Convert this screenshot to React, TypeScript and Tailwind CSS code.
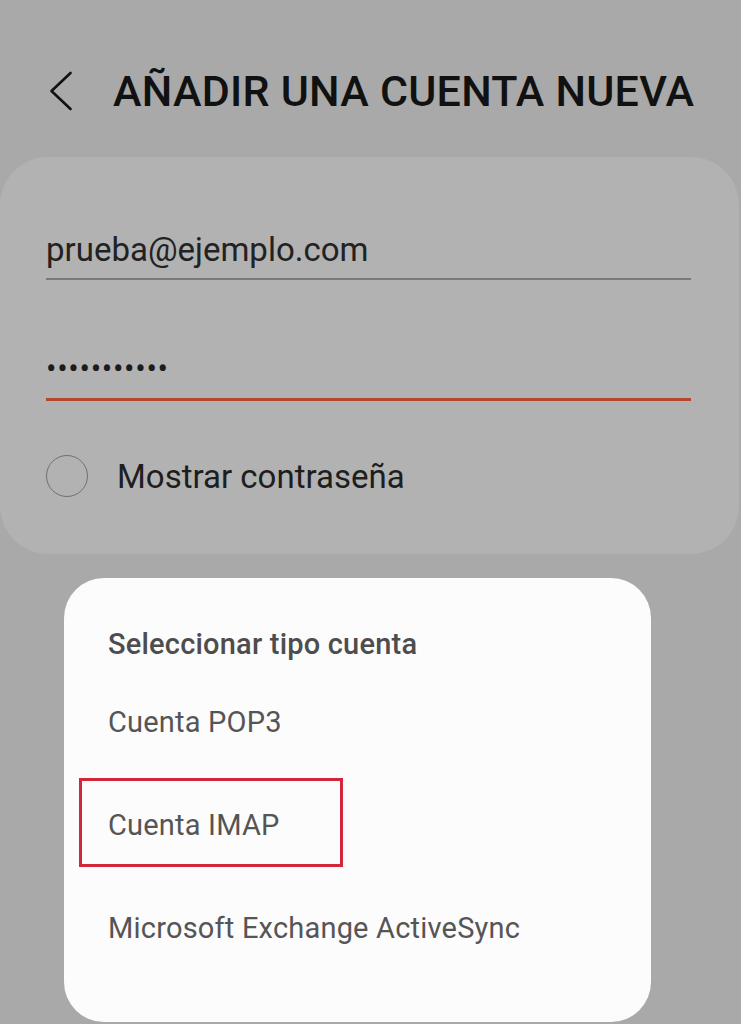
import { useState } from "react";

const accountTypes = ["Cuenta POP3", "Cuenta IMAP", "Microsoft Exchange ActiveSync"];

function BackChevron() {
  return (
    <svg width="26" height="40" viewBox="0 0 26 40" fill="none" className="ml-[48px] shrink-0">
      <path
        d="M22.5 2 L3.5 20 L22.5 38"
        stroke="#111"
        strokeWidth="2.6"
        strokeLinecap="round"
        strokeLinejoin="round"
      />
    </svg>
  );
}

export default function App() {
  const [showPassword, setShowPassword] = useState(false);

  return (
    <div
      className="w-full h-[1024px] bg-[#a9a9a9] overflow-hidden"
      style={{ fontFamily: "Roboto, 'Noto Sans', sans-serif" }}
    >
      {/* Cabecera */}
      <div className="flex items-center h-[64px] mt-[59px]">
        <BackChevron />
        <h1 className="ml-[39px] text-[43px] leading-none font-medium tracking-[0.25px] text-[#111] whitespace-nowrap">
          AÑADIR UNA CUENTA NUEVA
        </h1>
      </div>

      {/* Formulario */}
      <div className="mt-[34px] w-[739px] bg-[#b2b2b2] rounded-[48px] pt-[72px] pb-[57px] px-[46px]">
        <div className="h-[40px] flex items-center text-[33px] leading-none text-[#222]">
          prueba@ejemplo.com
        </div>
        <div className="mt-[9px] h-[2px] bg-[#7a7a7a] w-[645px]" />

        <div className="mt-[68px] h-[40px] flex items-center text-[31px] leading-none text-[#1c1c1c] tracking-[0.7px]">
          {showPassword ? "contraseña1" : "•••••••••••"}
        </div>
        <div className="mt-[10px] h-[3px] bg-[#b4472d] w-[645px]" />

        <button
          type="button"
          onClick={() => setShowPassword(!showPassword)}
          className="mt-[54px] h-[42px] flex items-center gap-[29px]"
        >
          <span className="w-[42px] h-[42px] rounded-full border-[1.5px] border-[#707070] shrink-0" />
          <span className="text-[33px] leading-none text-[#1e1e1e]">Mostrar contraseña</span>
        </button>
      </div>

      {/* Diálogo */}
      <div className="mt-[24px] ml-[64px] w-[587px] bg-[#fcfcfc] rounded-[40px] pt-[46px] pb-[42px] px-[44px]">
        <div className="h-[40px] flex items-center text-[29px] leading-none font-medium tracking-[0.2px] text-[#4d4d4d]">
          Seleccionar tipo cuenta
        </div>
        <div className="mt-[7px] flex flex-col">
          {accountTypes.map((type) => (
            <div
              key={type}
              className="relative h-[103px] flex items-center text-[29px] leading-none tracking-[0.2px] text-[#555]"
            >
              {type}
              {type === "Cuenta IMAP" && (
                <div className="absolute left-[-29px] top-[4px] w-[264px] h-[89px] border-[3px] border-[#d3283a]" />
              )}
            </div>
          ))}
        </div>
      </div>
    </div>
  );
}
